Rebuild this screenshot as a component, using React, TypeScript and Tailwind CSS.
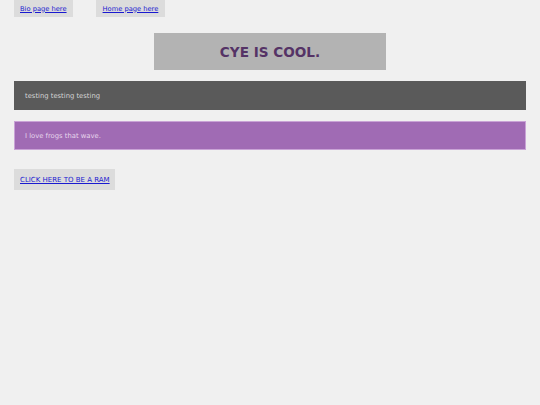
export default function App() {
  return (
    <div
      className="min-h-[405px] bg-[#f0f0f0] px-[14px]"
      style={{ fontFamily: '"DejaVu Sans", Verdana, sans-serif' }}
    >
      {/* Nav */}
      <div className="flex gap-[23px]">
        <div className="flex h-[17px] items-center bg-[#dcdcdc] px-[6px] pt-[1px]">
          <a href="#" className="text-[6.7px] leading-none text-[#1a1ad0] underline">
            Bio page here
          </a>
        </div>
        <div className="flex h-[17px] items-center bg-[#dcdcdc] px-[7px] pt-[1px]">
          <a href="#" className="text-[6.7px] leading-none text-[#1a1ad0] underline">
            Home page here
          </a>
        </div>
      </div>

      {/* Title */}
      <div className="mt-[16px] flex justify-center">
        <div className="flex h-[37px] w-[232px] items-center justify-center bg-[#b3b3b3] pt-[2px]">
          <h1 className="text-[13.6px] font-bold leading-none text-[#553366]">CYE IS COOL.</h1>
        </div>
      </div>

      {/* Bars */}
      <div className="mt-[11px] flex h-[29px] items-center bg-[#5a5a5a] px-[11px] pt-[2px]">
        <p className="text-[6.8px] leading-none text-[#d4d4d4]">testing testing testing</p>
      </div>
      <div className="mt-[11px] flex h-[29px] items-center border border-[#c9a3d6] bg-[#a06bb4] px-[10px] pt-[2px]">
        <p className="text-[6.8px] leading-none text-[#e6d6ec]">I love frogs that wave.</p>
      </div>

      {/* Button */}
      <div className="mt-[19px] flex">
        <div className="flex h-[21px] w-[101px] items-center bg-[#dcdcdc] px-[6px] pt-[2px]">
          <a href="#" className="whitespace-nowrap text-[7px] leading-none text-[#1a1ad0] underline">
            CLICK HERE TO BE A RAM
          </a>
        </div>
      </div>
    </div>
  );
}
